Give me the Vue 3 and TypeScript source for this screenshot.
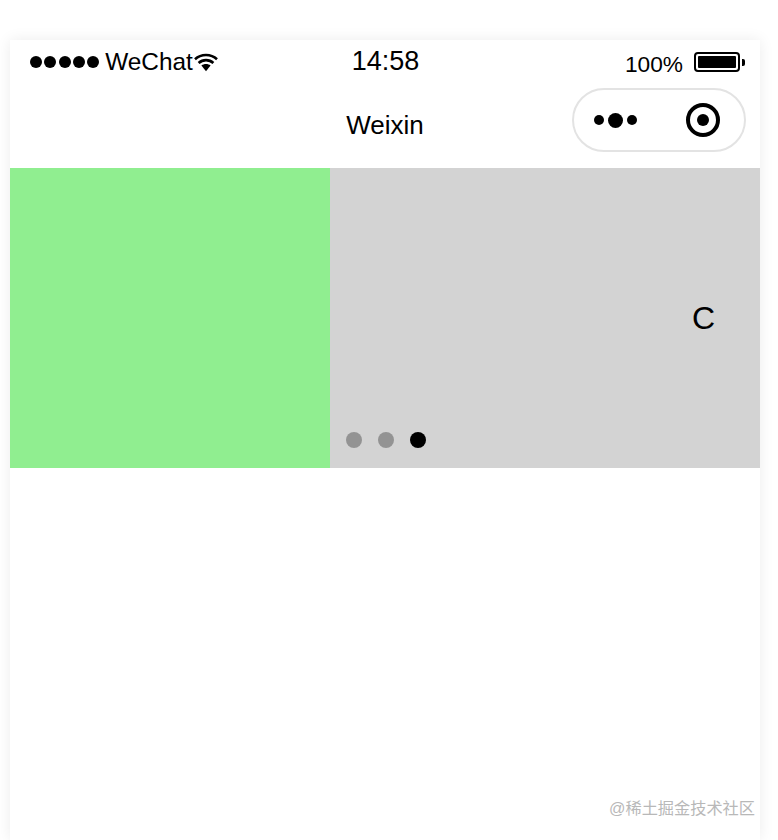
<!-- WeChat mini program swiper, simulator frame -->

<template>
    <div class="phone">
        <div class="status">
            <div class="status__left">
                <div class="signal">
                    <span v-for="n in 5" :key="n" class="signal__dot"></span>
                </div>
                <span class="status__carrier">WeChat</span>
                <svg class="wifi" width="24" height="20" viewBox="0 0 24 20">
                    <path d="M1 7.2C7 1.6 17 1.6 23 7.2" fill="none" stroke="#000" stroke-width="2.6" />
                    <path d="M4.6 11C8.8 7.2 15.2 7.2 19.4 11" fill="none" stroke="#000" stroke-width="2.6" />
                    <path d="M7.4 13.6C10 11.6 14 11.6 16.6 13.6L12 19.2Z" fill="#000" />
                </svg>
            </div>
            <div class="status__time">14:58</div>
            <div class="status__right">
                <span class="status__battery-text">100%</span>
                <div class="battery">
                    <div class="battery__body">
                        <div class="battery__fill"></div>
                    </div>
                    <div class="battery__tip"></div>
                </div>
            </div>
        </div>

        <div class="nav">
            <div class="nav__title">Weixin</div>
            <div class="capsule">
                <div class="capsule__dots">
                    <span class="capsule__dot"></span>
                    <span class="capsule__dot capsule__dot--big"></span>
                    <span class="capsule__dot"></span>
                </div>
                <div class="capsule__target">
                    <div class="capsule__target-core"></div>
                </div>
            </div>
        </div>

        <div class="swiper">
            <div class="slide slide--green"></div>
            <div class="slide slide--gray">C</div>
            <div class="indicator">
                <span
                    v-for="(item, i) in slides"
                    :key="item"
                    class="indicator__dot"
                    :class="{ 'active': i === current }"
                ></span>
            </div>
        </div>

        <div class="watermark">@稀土掘金技术社区</div>
    </div>
</template>

<script setup lang="ts">
import { ref } from 'vue';

const slides = ['A', 'B', 'C'];
const current = ref(2);
</script>

<style scoped>
.phone {
    position: relative;
    width: 750px;
    height: 800px;
    margin: 40px 0 0 10px;
    background-color: #fff;
    box-shadow: 0 0 14px rgba(0, 0, 0, 0.08);
    font-family: "Liberation Sans", Arial, sans-serif;
    color: #000;
}

.status {
    display: grid;
    grid-template-columns: 1fr auto 1fr;
    align-items: center;
    height: 44px;
    padding: 0 15px 0 16px;
}

.status__left {
    display: flex;
    align-items: center;
    padding-left: 4px;
}

.signal {
    display: flex;
    gap: 2.3px;
}

.signal__dot {
    width: 12px;
    height: 12px;
    border-radius: 50%;
    background-color: #000;
}

.status__carrier {
    margin-left: 6px;
    font-size: 24.4px;
}

.wifi {
    margin-left: 1px;
}

.status__time {
    padding-bottom: 2px;
    font-size: 27px;
}

.status__right {
    display: flex;
    align-items: center;
    justify-content: flex-end;
    gap: 11px;
}

.status__battery-text {
    margin-top: 4px;
    font-size: 22.7px;
}

.battery {
    display: flex;
    align-items: center;
}

.battery__body {
    width: 46px;
    height: 20px;
    padding: 2px;
    box-sizing: border-box;
    border: 2px solid #000;
    border-radius: 4px;
}

.battery__fill {
    height: 100%;
    background-color: #000;
    border-radius: 1px;
}

.battery__tip {
    width: 3px;
    height: 7px;
    margin-left: 2px;
    background-color: #000;
    border-radius: 0 2px 2px 0;
}

.nav {
    display: grid;
    grid-template-columns: 1fr auto 1fr;
    align-items: center;
    height: 84px;
    padding-right: 14px;
    box-sizing: border-box;
}

.nav__title {
    grid-column: 2;
    padding-left: 14px;
    padding-bottom: 2px;
    font-size: 26px;
}

.capsule {
    grid-column: 3;
    justify-self: end;
    display: flex;
    align-items: center;
    justify-content: space-between;
    width: 174px;
    height: 64px;
    margin-bottom: 12px;
    padding: 0 24px 0 20px;
    box-sizing: border-box;
    border: 2px solid #e3e3e3;
    border-radius: 32px;
}

.capsule__dots {
    display: flex;
    align-items: center;
    gap: 4px;
}

.capsule__dot {
    width: 10px;
    height: 10px;
    border-radius: 50%;
    background-color: #000;
}

.capsule__dot--big {
    width: 15px;
    height: 15px;
}

.capsule__target {
    display: flex;
    align-items: center;
    justify-content: center;
    width: 34px;
    height: 34px;
    box-sizing: border-box;
    border: 4px solid #000;
    border-radius: 50%;
}

.capsule__target-core {
    width: 12px;
    height: 12px;
    border-radius: 50%;
    background-color: #000;
}

.swiper {
    position: relative;
    display: flex;
    height: 300px;
}

.slide {
    height: 100%;
}

.slide--green {
    width: 320px;
    background-color: #90ee90;
}

.slide--gray {
    flex: 1;
    display: flex;
    align-items: center;
    justify-content: flex-end;
    padding-right: 45px;
    background-color: #d3d3d3;
    font-size: 32px;
}

.indicator {
    position: absolute;
    left: 336px;
    bottom: 20px;
    display: flex;
    gap: 16px;
}

.indicator__dot {
    width: 16px;
    height: 16px;
    border-radius: 50%;
    background-color: rgba(0, 0, 0, 0.3);
}

.indicator__dot.active {
    background-color: #000;
}

.watermark {
    position: absolute;
    right: 5px;
    top: 755px;
    font-family: "Liberation Sans", "Noto Sans CJK SC", sans-serif;
    font-size: 16.2px;
    color: #b8b8b8;
}
</style>

<style>
html,
body {
    margin: 0;
    background-color: #fff;
    overflow: hidden;
}
</style>
